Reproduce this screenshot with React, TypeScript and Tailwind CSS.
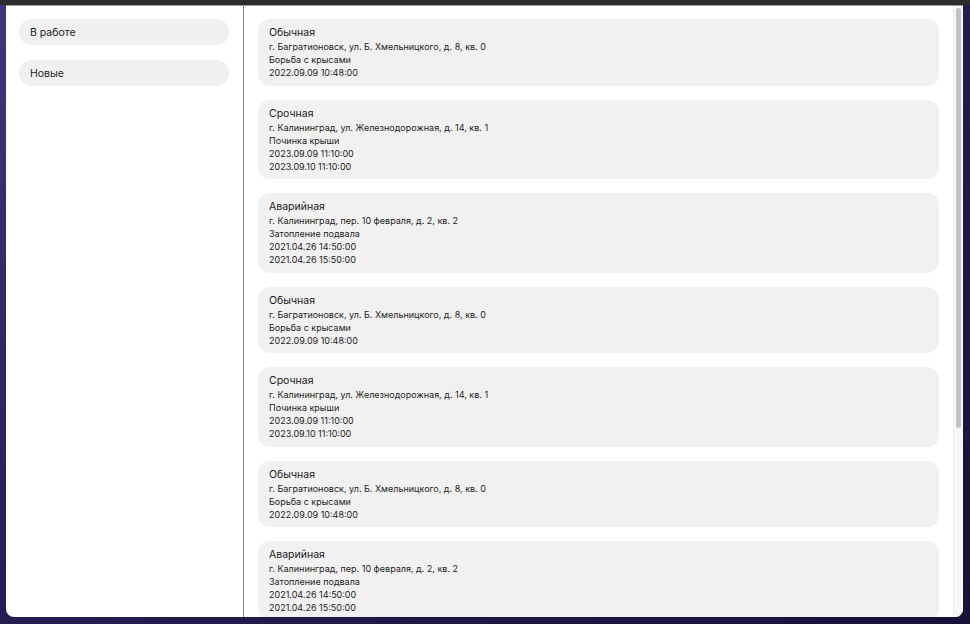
import React from "react";

interface Order {
  kind: string;
  address: string;
  task: string;
  dates: string[];
}

const ordinary: Order = {
  kind: "Обычная",
  address: "г. Багратионовск, ул. Б. Хмельницкого, д. 8, кв. 0",
  task: "Борьба с крысами",
  dates: ["2022.09.09 10:48:00"],
};

const urgent: Order = {
  kind: "Срочная",
  address: "г. Калининград, ул. Железнодорожная, д. 14, кв. 1",
  task: "Починка крыши",
  dates: ["2023.09.09 11:10:00", "2023.09.10 11:10:00"],
};

const emergency: Order = {
  kind: "Аварийная",
  address: "г. Калининград, пер. 10 февраля, д. 2, кв. 2",
  task: "Затопление подвала",
  dates: ["2021.04.26 14:50:00", "2021.04.26 15:50:00"],
};

const orders: Order[] = [ordinary, urgent, emergency, ordinary, urgent, ordinary, emergency];

function OrderCard({ order }: { order: Order }) {
  return (
    <div className="shrink-0 rounded-[12px] bg-[#f1f1f1] pl-[11px] pr-[11px] pt-[7px] pb-[6.5px] text-[#1c1c1c]">
      <div className="text-[10.5px] leading-[14px]">{order.kind}</div>
      <div className="text-[9px] leading-[13px]">{order.address}</div>
      <div className="text-[9px] leading-[13px]">{order.task}</div>
      {order.dates.map((d, i) => (
        <div key={i} className="text-[9px] leading-[13px]">
          {d}
        </div>
      ))}
    </div>
  );
}

function SideButton({ label }: { label: string }) {
  return (
    <button className="h-[26px] w-full rounded-[13px] bg-[#f0f0f0] pl-[11px] pt-[2px] text-left text-[10.5px] text-[#1c1c1c]">
      {label}
    </button>
  );
}

export default function App() {
  return (
    <div
      className="flex h-[624px] w-[970px] flex-col overflow-hidden bg-gradient-to-br from-[#40357a] via-[#241d52] to-[#17123a]"
      style={{ fontFamily: "Inter, 'Noto Sans', sans-serif" }}
    >
      <div className="h-[5px] shrink-0 bg-[#2c2c2c]" />
      <div className="flex min-h-0 flex-1 pl-[6px] pr-[7px] pb-[7px]">
        <div className="flex min-h-0 flex-1 overflow-hidden rounded-b-[8px] border-t border-[#9a9a9a] bg-white">
          <aside className="flex w-[238px] shrink-0 flex-col gap-[15px] border-r border-[#7d7d7d] pl-[13px] pr-[14px] pt-[13px]">
            <SideButton label="В работе" />
            <SideButton label="Новые" />
          </aside>
          <main className="flex min-h-0 flex-1 flex-col gap-[14px] overflow-hidden pl-[14px] pr-[14px] pt-[13px]">
            {orders.map((o, i) => (
              <OrderCard key={i} order={o} />
            ))}
          </main>
          <div className="flex w-[10px] shrink-0 justify-center border-l border-[#ececec] bg-[#f7f7f7] pt-[2px]">
            <div className="h-[420px] w-[5px] rounded-full bg-[#c2c2c2]" />
          </div>
        </div>
      </div>
    </div>
  );
}
